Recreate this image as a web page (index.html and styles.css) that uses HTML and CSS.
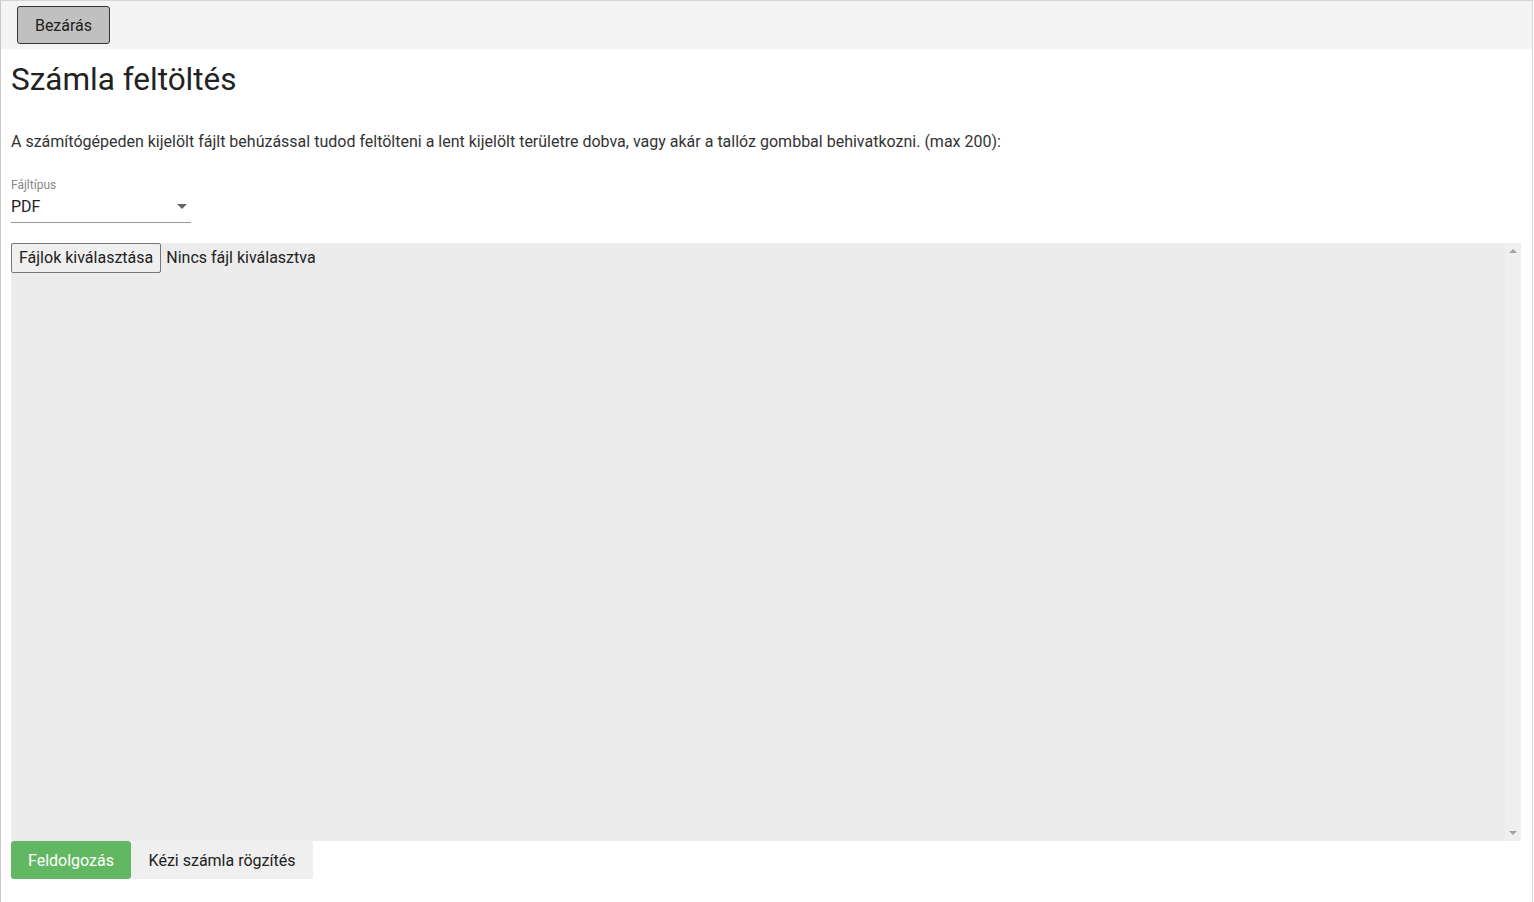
FILE: index.html
```html
<!DOCTYPE html>
<html lang="hu">
<head>
<meta charset="utf-8">
<title>Számla feltöltés</title>
<link rel="stylesheet" href="styles.css">
</head>
<body>
<div class="frame">
  <div class="topbar">
    <button class="close-btn">Bezárás</button>
  </div>
  <div class="content">
    <h1 class="title">Számla feltöltés</h1>
    <p class="intro">A számítógépeden kijelölt fájlt behúzással tudod feltölteni a lent kijelölt területre dobva, vagy akár a tallóz gombbal behivatkozni. (max 200):</p>
    <div class="field">
      <div class="field-label">Fájltípus</div>
      <div class="select">
        <span class="select-value">PDF</span>
        <span class="select-arrow"></span>
      </div>
    </div>
    <div class="dropzone">
      <div class="drop-main">
        <div class="file-row">
          <span class="file-btn">Fájlok kiválasztása</span>
          <span class="file-status">Nincs fájl kiválasztva</span>
        </div>
      </div>
      <div class="scrollbar">
        <span class="arrow-up"></span>
        <span class="arrow-down"></span>
      </div>
    </div>
    <div class="actions">
      <button class="btn-green">Feldolgozás</button>
      <button class="btn-light">Kézi számla rögzítés</button>
    </div>
  </div>
</div>
</body>
</html>
```

FILE: styles.css
```css
html, body {
  margin: 0;
  padding: 0;
  background: #ffffff;
}
body {
  font-family: Roboto, "Liberation Sans", Arial, sans-serif;
  color: #222;
}
.frame {
  width: 1531px;
  height: 901px;
  border: 1px solid #d6d6d6;
  border-left-color: #c8c8c8;
  box-sizing: content-box;
  overflow: hidden;
}
.topbar {
  height: 48px;
  background: #f4f4f4;
  padding-left: 16px;
  padding-top: 5px;
  box-sizing: border-box;
}
.close-btn {
  width: 93px;
  height: 38px;
  background: #c0c0c0;
  border: 1px solid #333;
  border-radius: 3px;
  font-family: Roboto, "Liberation Sans", Arial, sans-serif;
  font-size: 16px;
  color: #222;
  padding: 0;
}
.content {
  padding: 0 10px;
}
.title {
  margin: 0;
  padding-top: 13px;
  font-size: 31.5px;
  font-weight: 400;
  line-height: 36px;
  color: #222;
}
.intro {
  margin: 0;
  padding-top: 33px;
  font-size: 16px;
  line-height: 22px;
  color: #333;
}
.field {
  width: 180px;
  padding-top: 25px;
}
.field-label {
  font-size: 12px;
  line-height: 14px;
  color: #888;
}
.select {
  display: flex;
  align-items: center;
  justify-content: space-between;
  height: 29px;
  border-bottom: 1px solid #999;
  box-sizing: border-box;
  margin-top: 2px;
  padding-bottom: 3px;
}
.select-value {
  font-size: 16px;
  color: #222;
}
.select-arrow {
  width: 0;
  height: 0;
  border-left: 5px solid transparent;
  border-right: 5px solid transparent;
  border-top: 5px solid #666;
  margin-right: 4px;
}
.dropzone {
  margin-top: 20px;
  height: 598px;
  display: flex;
  background: #ececec;
  width: 1510px;
}
.drop-main {
  flex: 1;
}
.file-row {
  display: flex;
  align-items: center;
  gap: 5px;
}
.file-btn {
  height: 30px;
  box-sizing: border-box;
  border: 1px solid #767676;
  border-radius: 2px;
  background: #efefef;
  padding: 0 7px;
  font-size: 16px;
  line-height: 28px;
  color: #222;
}
.file-status {
  font-size: 16px;
  color: #222;
  margin-top: -2px;
}
.scrollbar {
  width: 16px;
  background: #efefef;
  display: flex;
  flex-direction: column;
  justify-content: space-between;
  align-items: center;
  padding: 6px 0;
  box-sizing: border-box;
}
.arrow-up {
  width: 0;
  height: 0;
  border-left: 4px solid transparent;
  border-right: 4px solid transparent;
  border-bottom: 4px solid #a3a3a3;
}
.arrow-down {
  width: 0;
  height: 0;
  border-left: 4px solid transparent;
  border-right: 4px solid transparent;
  border-top: 4px solid #a3a3a3;
}
.actions {
  display: flex;
  margin-top: 0;
}
.btn-green {
  height: 38px;
  width: 120px;
  background: #62b862;
  color: #fff;
  border: none;
  border-radius: 3px;
  font-family: Roboto, "Liberation Sans", Arial, sans-serif;
  font-size: 16px;
  padding: 0;
}
.btn-light {
  height: 38px;
  width: 182px;
  background: #efefef;
  color: #222;
  border: none;
  border-radius: 3px;
  font-family: Roboto, "Liberation Sans", Arial, sans-serif;
  font-size: 16px;
  padding: 0;
}
```
